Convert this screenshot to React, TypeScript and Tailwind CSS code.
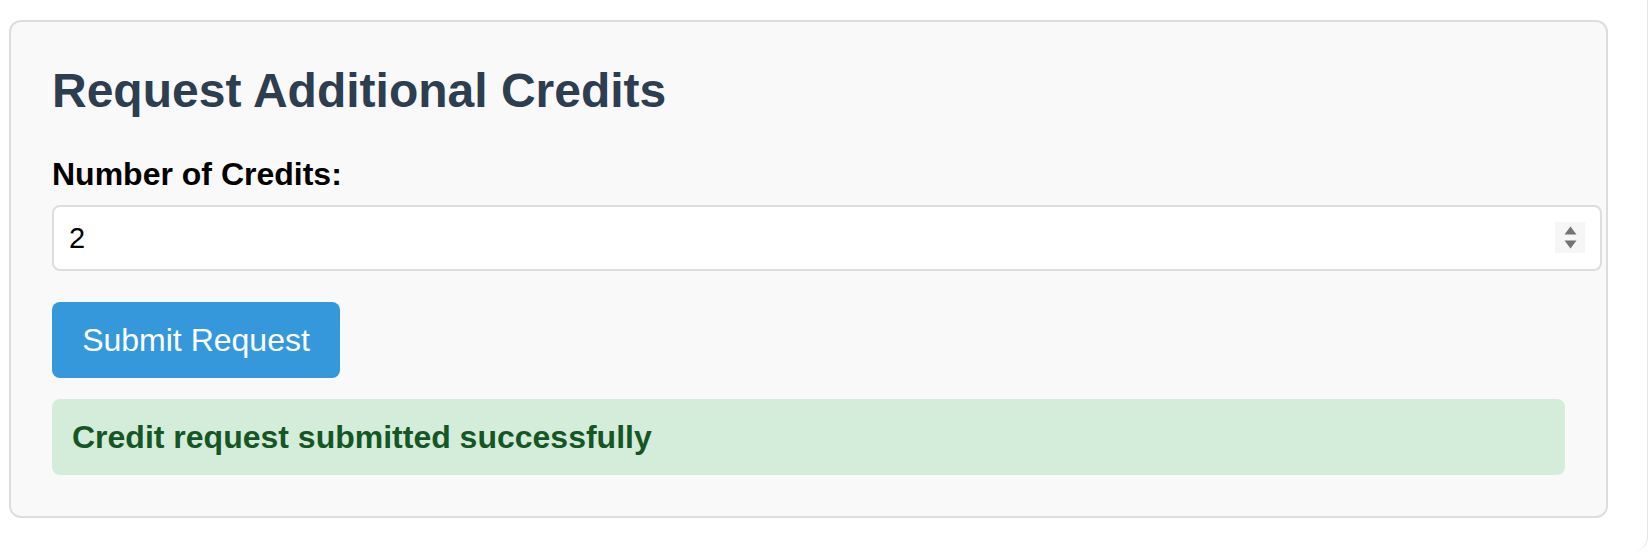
import React from 'react';

const Spinner: React.FC = () => (
  <div className="absolute right-[17px] top-[17px] flex h-[31px] w-[30px] flex-col items-center justify-center gap-[5px] bg-[#f6f6f6]">
    <svg width="13" height="9" viewBox="0 0 13 9">
      <path d="M6.5 0.5 L12.5 8.5 L0.5 8.5 Z" fill="#737373" />
    </svg>
    <svg width="13" height="9" viewBox="0 0 13 9">
      <path d="M0.5 0.5 L12.5 0.5 L6.5 8.5 Z" fill="#737373" />
    </svg>
  </div>
);

const App: React.FC = () => {
  return (
    <div className="h-[553px] w-full bg-white font-['Liberation_Sans',Arial,sans-serif]">
      <div className="h-[551px] w-[1648px] rounded-br-[14px] border-r border-[#e6e6e6] pl-[9px] pt-[20px]">
        {/* Card */}
        <div className="w-[1599px] rounded-[12px] border-2 border-[#dddddd] bg-[#f9f9f9] px-[41px] pt-[41px] pb-[41px]">
          <h2 className="mb-[38px] text-[48px] font-bold leading-[55px] text-[#2c3e50]">
            Request Additional Credits
          </h2>

          <label className="mb-[12px] block text-[32px] font-bold leading-[37px] text-black">
            Number of Credits:
          </label>
          <div className="relative w-[1550px]">
            <input
              type="text"
              defaultValue="2"
              className="block h-[66px] w-[1550px] rounded-[8px] border-2 border-[#dddddd] bg-white px-[15px] text-[29px] text-black outline-none"
            />
            <Spinner />
          </div>

          <button className="mt-[31px] h-[76px] w-[288px] rounded-[8px] bg-[#3498db] text-[32px] leading-[37px] text-white">
            Submit Request
          </button>

          {/* Status message */}
          <div className="mt-[21px] h-[76px] rounded-[8px] bg-[#d4edda] px-[20px] py-[20px] text-[32px] font-bold leading-[36px] text-[#155724]">
            Credit request submitted successfully
          </div>
        </div>
      </div>
    </div>
  );
};

export default App;
